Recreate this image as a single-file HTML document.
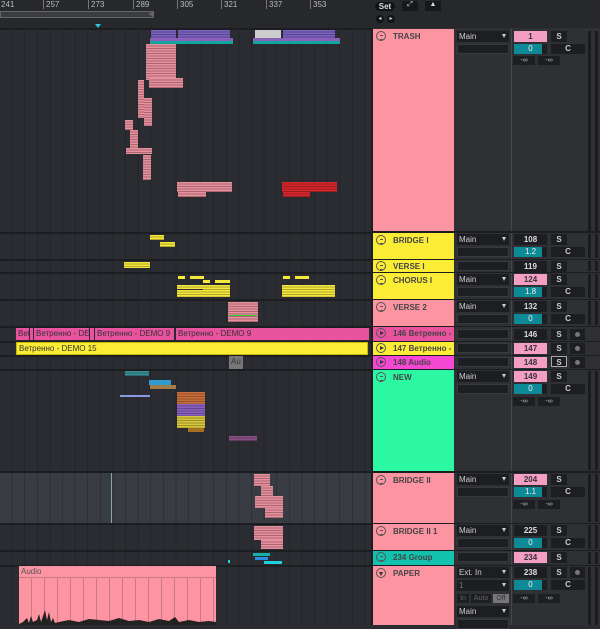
<!DOCTYPE html>
<html><head><meta charset="utf-8">
<style>
*{margin:0;padding:0;box-sizing:border-box}
body{width:600px;height:625px;overflow:hidden;background:#2a2c31;font-family:"Liberation Sans","DejaVu Sans",sans-serif;position:relative}
.a{position:absolute}
#arr{left:0;top:28px;width:371px;height:597px;background:#2a2c31;
background-image:repeating-linear-gradient(90deg,transparent 0,transparent 11.6px,#222428 11.6px,#222428 12.6px)}
.sep{position:absolute;left:0;width:371px;height:2px;background:#1c1d20}
.st{background-image:repeating-linear-gradient(180deg,rgba(0,0,0,.0) 0,rgba(0,0,0,0) 1.5px,rgba(0,0,0,.28) 1.5px,rgba(0,0,0,.28) 2.5px)}
.pk{background-color:#e8909d}
.ye{background-color:#f5e83c}
.cp{position:absolute;left:373px;width:81px;font-size:8px;font-weight:bold;color:#444;padding:3px 0 0 20px}
.cp i{position:absolute;left:3px;top:2px;width:10px;height:10px;border:1.2px solid #555;border-radius:50%}
.cp i:after{content:"";position:absolute;left:2.5px;top:2.5px;width:3px;height:3px;border-top:1px solid #555;border-bottom:1px solid #555}
.cp i.p:after{border:none;left:3px;top:2px;width:0;height:0;border-left:4px solid #333;border-top:2.5px solid transparent;border-bottom:2.5px solid transparent}
.cp i.d:after{border:none;left:1.5px;top:3px;width:0;height:0;border-top:4px solid #333;border-left:2.5px solid transparent;border-right:2.5px solid transparent}
.dd{position:absolute;left:457px;width:52px;height:11px;background:#1d1e21;color:#ccc;font-size:8px;padding:1px 2px}
.dd:after{content:"";position:absolute;right:3px;top:3px;border-top:4px solid #ccc;border-left:2.5px solid transparent;border-right:2.5px solid transparent}
.bx{position:absolute;left:457px;width:52px;height:10px;background:#1d1e21;border:1px solid #38393d}
.nb{position:absolute;left:514px;width:33px;height:11px;background:#1d1e21;color:#ddd;font-size:8px;font-weight:bold;text-align:center;line-height:11px}
.nb.pkn{background:#f59ec4;color:#333}
.tl{position:absolute;left:514px;width:33px;height:10px;background:#1d1e21;color:#eee;font-size:8px;text-align:center;line-height:10px}
.tl b{position:absolute;left:0;top:0;height:10px;width:28px;background:#0e8a97}
.tl span{position:relative}
.sb{position:absolute;left:551px;width:16px;height:11px;background:#1d1e21;color:#ccc;font-size:8px;font-weight:bold;text-align:center;line-height:11px}
.cb{position:absolute;left:551px;width:34px;height:10px;background:#1d1e21;color:#ccc;font-size:8px;font-weight:bold;text-align:center;line-height:10px}
.rb{position:absolute;left:570px;width:15px;height:11px;background:#1d1e21}
.rb:after{content:"";position:absolute;left:5px;top:3px;width:5px;height:5px;border-radius:50%;background:#777}
.inf{position:absolute;width:22px;height:9px;background:#1d1e21;color:#bbb;font-size:7px;text-align:center;line-height:9px}
.mt{position:absolute;left:588px;width:3px;background:#1a1b1e}
.mt2{position:absolute;left:595px;width:3px;background:#1a1b1e}
.clip{position:absolute;font-size:8px;color:#333;line-height:11px;padding-left:2px;overflow:hidden;white-space:nowrap}
</style></head><body>
<div class="a" style="left:0;top:0;width:371px;height:28px;background:#26282c"></div>
<div class="a" style="left:0;top:0;width:371px;height:10px;color:#bbb;font-size:8px">
<span class="a" style="left:1px">241</span><span class="a" style="left:43px;border-left:1px solid #777;padding-left:2px">257</span><span class="a" style="left:88px;border-left:1px solid #777;padding-left:2px">273</span><span class="a" style="left:133px;border-left:1px solid #777;padding-left:2px">289</span><span class="a" style="left:177px;border-left:1px solid #777;padding-left:2px">305</span><span class="a" style="left:221px;border-left:1px solid #777;padding-left:2px">321</span><span class="a" style="left:266px;border-left:1px solid #777;padding-left:2px">337</span><span class="a" style="left:310px;border-left:1px solid #777;padding-left:2px">353</span></div>
<div class="a" style="left:0;top:11px;width:154px;height:7px;background:#3a3c40;border:1px solid #666"></div>
<div class="a" style="left:148px;top:11px;width:0;height:0;border-right:6px solid #666;border-top:3.5px solid transparent;border-bottom:3.5px solid transparent"></div>
<div class="a" style="left:95px;top:24px;width:0;height:0;border-top:4px solid #2cc6d6;border-left:3px solid transparent;border-right:3px solid transparent"></div>
<div class="a" style="left:371px;top:0;width:229px;height:28px;background:#26282c"></div>
<div class="a" style="left:375px;top:2px;width:20px;height:9px;background:#121315;border-radius:5px;color:#ddd;font-size:8px;font-weight:bold;text-align:center;line-height:9px">Set</div>
<div class="a" style="left:402px;top:1px;width:16px;height:10px;background:#17181a;color:#ddd;font-size:7px;text-align:center">⤢</div>
<div class="a" style="left:425px;top:1px;width:16px;height:10px;background:#17181a;color:#ddd;font-size:7px;text-align:center">▲</div>
<div class="a" style="left:376px;top:15px;width:8px;height:8px;border-radius:50%;background:#121315;color:#ddd;font-size:6px;text-align:center;line-height:8px">◂</div>
<div class="a" style="left:387px;top:15px;width:8px;height:8px;border-radius:50%;background:#121315;color:#ddd;font-size:6px;text-align:center;line-height:8px">▸</div>

<div id="arr" class="a"></div>
<div class="a" style="left:0;top:473px;width:371px;height:50px;background:#393c43;background-image:repeating-linear-gradient(90deg,transparent 0,transparent 11.6px,#2f3137 11.6px,#2f3137 12.6px)"></div>
<div class="a" style="left:111px;top:473px;width:1px;height:50px;background:#8aa"></div>
<div class="sep" style="top:28px"></div>
<div class="sep" style="top:232px"></div><div class="sep" style="top:259px"></div><div class="sep" style="top:272px"></div><div class="sep" style="top:299px"></div><div class="sep" style="top:326px"></div><div class="sep" style="top:341px"></div><div class="sep" style="top:355px"></div><div class="sep" style="top:369px"></div><div class="sep" style="top:471px"></div><div class="sep" style="top:523px"></div><div class="sep" style="top:550px"></div><div class="sep" style="top:565px"></div>

<div class="a st" style="left:151px;top:30px;width:25px;height:8px;background-color:#7b62c0"></div>
<div class="a st" style="left:178px;top:30px;width:52px;height:8px;background-color:#7b62c0"></div>
<div class="a" style="left:150px;top:38px;width:83px;height:6px;background:linear-gradient(#8a5fb8 50%,#13a6a0 50%)"></div>
<div class="a" style="left:255px;top:30px;width:26px;height:8px;background:#ccc"></div>
<div class="a st" style="left:283px;top:30px;width:52px;height:8px;background-color:#7b62c0"></div>
<div class="a" style="left:253px;top:38px;width:87px;height:6px;background:linear-gradient(#8a5fb8 50%,#13a6a0 50%)"></div>
<div class="a st pk" style="left:146px;top:44px;width:30px;height:36px"></div>
<div class="a st pk" style="left:149px;top:78px;width:34px;height:10px"></div>
<div class="a st pk" style="left:144px;top:98px;width:8px;height:28px"></div>
<div class="a st pk" style="left:138px;top:80px;width:6px;height:38px"></div>
<div class="a st pk" style="left:125px;top:120px;width:8px;height:10px"></div>
<div class="a st pk" style="left:130px;top:130px;width:8px;height:20px"></div>
<div class="a st pk" style="left:126px;top:148px;width:26px;height:6px"></div>
<div class="a st pk" style="left:143px;top:155px;width:8px;height:25px"></div>
<div class="a st pk" style="left:177px;top:182px;width:55px;height:10px"></div>
<div class="a st pk" style="left:178px;top:192px;width:28px;height:5px"></div>
<div class="a st" style="left:282px;top:182px;width:55px;height:10px;background-color:#d8272b"></div>
<div class="a st" style="left:283px;top:192px;width:27px;height:5px;background-color:#d8272b"></div>
<div class="a st ye" style="left:150px;top:235px;width:14px;height:5px"></div>
<div class="a st ye" style="left:160px;top:242px;width:15px;height:5px"></div>
<div class="a st ye" style="left:124px;top:262px;width:26px;height:6px"></div>
<!-- chorus pieces -->
<div class="a ye" style="left:178px;top:276px;width:7px;height:3px"></div>
<div class="a ye" style="left:190px;top:276px;width:14px;height:3px"></div>
<div class="a ye" style="left:203px;top:280px;width:7px;height:3px"></div>
<div class="a ye" style="left:215px;top:280px;width:15px;height:3px"></div>
<div class="a st ye" style="left:177px;top:285px;width:26px;height:4px"></div>
<div class="a st ye" style="left:203px;top:285px;width:27px;height:12px"></div>
<div class="a st ye" style="left:177px;top:290px;width:26px;height:7px"></div>
<div class="a ye" style="left:283px;top:276px;width:7px;height:3px"></div>
<div class="a ye" style="left:295px;top:276px;width:14px;height:3px"></div>
<div class="a st ye" style="left:282px;top:285px;width:26px;height:5px"></div>
<div class="a st ye" style="left:308px;top:285px;width:27px;height:12px"></div>
<div class="a st ye" style="left:282px;top:290px;width:26px;height:7px"></div>
<div class="a st pk" style="left:228px;top:302px;width:30px;height:20px"></div>
<div class="a" style="left:229px;top:315px;width:28px;height:1px;background:#3c3"></div>
<div class="clip" style="left:16px;top:328px;width:13px;height:12px;background:#e8529e">Bet</div>
<div class="clip" style="left:30px;top:328px;width:3px;height:12px;background:#e8529e"></div>
<div class="clip" style="left:34px;top:328px;width:55px;height:12px;background:#e8529e">Ветренно - DEMO</div>
<div class="clip" style="left:90px;top:328px;width:4px;height:12px;background:#e8529e"></div>
<div class="clip" style="left:95px;top:328px;width:79px;height:12px;background:#e8529e">Ветренно - DEMO 9</div>
<div class="clip" style="left:176px;top:328px;width:193px;height:12px;background:#e8529e">Ветренно - DEMO 9</div>
<div class="clip" style="left:16px;top:342px;width:352px;height:13px;background:#fbed35;border:1px solid #c9b800">Ветренно - DEMO 15</div>
<div class="clip" style="left:229px;top:356px;width:14px;height:13px;background:#777;color:#333">Au</div>
<div class="a st" style="left:125px;top:371px;width:24px;height:5px;background-color:#3a8f97"></div>
<div class="a" style="left:149px;top:380px;width:22px;height:5px;background:#2f9bd0"></div>
<div class="a" style="left:150px;top:385px;width:26px;height:4px;background:#a07c4a"></div>
<div class="a" style="left:120px;top:395px;width:30px;height:2px;background:#8a9ae0"></div>
<div class="a st" style="left:177px;top:392px;width:28px;height:12px;background-color:#c96d3a"></div>
<div class="a st" style="left:177px;top:404px;width:28px;height:12px;background-color:#8a60c0"></div>
<div class="a st" style="left:177px;top:416px;width:28px;height:12px;background-color:#d8c83a"></div>
<div class="a" style="left:188px;top:428px;width:16px;height:4px;background:#a77020"></div>
<div class="a st" style="left:229px;top:436px;width:28px;height:5px;background-color:#8a5088"></div>
<div class="a st pk" style="left:254px;top:474px;width:16px;height:12px"></div>
<div class="a st pk" style="left:261px;top:486px;width:12px;height:10px"></div>
<div class="a st pk" style="left:255px;top:496px;width:28px;height:12px"></div>
<div class="a st pk" style="left:265px;top:508px;width:18px;height:10px"></div>
<div class="a st pk" style="left:254px;top:526px;width:29px;height:14px"></div>
<div class="a st pk" style="left:261px;top:540px;width:22px;height:9px"></div>
<div class="a" style="left:253px;top:553px;width:17px;height:3px;background:#13b0a8"></div>
<div class="a" style="left:255px;top:557px;width:13px;height:3px;background:#2a8fe0"></div>
<div class="a" style="left:264px;top:561px;width:18px;height:3px;background:#1fd0e0"></div>
<div class="a" style="left:228px;top:560px;width:2px;height:3px;background:#1fd0e0"></div>
<div class="a" style="left:19px;top:566px;width:197px;height:59px;background:#fc94a2;background-image:repeating-linear-gradient(90deg,transparent 0,transparent 12px,#c97884 12px,#c97884 13px)"></div>
<div class="a" style="left:19px;top:566px;width:197px;height:12px;background:#fc94a2;border-bottom:1px solid #c97884;font-size:8px;color:#555;padding:1px 2px">Audio</div>
<svg class="a" style="left:19px;top:600px" width="197" height="25"><path d="M0 24 L4 22 8 18 10 23 12 16 14 22 18 20 20 14 22 22 26 10 28 20 30 12 32 22 34 18 36 23 40 22 50 20 60 22 70 19 80 20 90 21 100 18 110 21 120 20 130 22 140 19 150 21 156 17 160 22 170 20 180 22 190 21 197 22 L197 25 L0 25Z" fill="#222"/></svg>

<div class="a" style="left:371px;top:28px;width:2px;height:597px;background:#1c1d20"></div>
<div class="a" style="left:454px;top:28px;width:57px;height:597px;background:#2e3034"></div>
<div class="a" style="left:511px;top:28px;width:1px;height:597px;background:#45474c"></div>
<div class="a" style="left:512px;top:28px;width:88px;height:597px;background:#2e3034"></div>
<div class="a" style="left:371px;top:231px;width:229px;height:2px;background:#1c1d20"></div>
<div class="a" style="left:371px;top:259px;width:229px;height:1px;background:#1c1d20"></div>
<div class="a" style="left:371px;top:272px;width:229px;height:1px;background:#1c1d20"></div>
<div class="a" style="left:371px;top:299px;width:229px;height:1px;background:#1c1d20"></div>
<div class="a" style="left:371px;top:326px;width:229px;height:1px;background:#1c1d20"></div>
<div class="a" style="left:371px;top:341px;width:229px;height:1px;background:#1c1d20"></div>
<div class="a" style="left:371px;top:355px;width:229px;height:1px;background:#1c1d20"></div>
<div class="a" style="left:371px;top:369px;width:229px;height:1px;background:#1c1d20"></div>
<div class="a" style="left:371px;top:471px;width:229px;height:2px;background:#1c1d20"></div>
<div class="a" style="left:371px;top:523px;width:229px;height:1px;background:#1c1d20"></div>
<div class="a" style="left:371px;top:550px;width:229px;height:1px;background:#1c1d20"></div>
<div class="a" style="left:371px;top:565px;width:229px;height:1px;background:#1c1d20"></div>

<div class="cp" style="top:29px;height:202px;background:#fc94a2"><i></i>TRASH</div>
<div class="cp" style="top:233px;height:26px;background:#fbed35"><i></i>BRIDGE I</div>
<div class="cp" style="top:260px;height:12px;background:#fbed35;padding-top:2px"><i style="top:1px"></i>VERSE I</div>
<div class="cp" style="top:273px;height:26px;background:#fbed35"><i></i>CHORUS I</div>
<div class="cp" style="top:300px;height:26px;background:#fc94a2"><i></i>VERSE 2</div>
<div class="cp" style="top:327px;height:14px;background:#e8529e;padding-top:2px"><i class="p" style="top:1px"></i>146 Ветренно -</div>
<div class="cp" style="top:342px;height:13px;background:#fbed35;padding-top:2px"><i class="p" style="top:1px"></i>147 Ветренно -</div>
<div class="cp" style="top:356px;height:13px;background:#f546d4;padding-top:2px"><i class="p" style="top:1px"></i>148 Audio</div>
<div class="cp" style="top:370px;height:101px;background:#2cf8a4"><i></i>NEW</div>
<div class="cp" style="top:473px;height:50px;background:#fc94a2"><i></i>BRIDGE II</div>
<div class="cp" style="top:524px;height:26px;background:#fc94a2"><i></i>BRIDGE II 1</div>
<div class="cp" style="top:551px;height:14px;background:#13c2ae;padding-top:2px"><i style="top:1px"></i>234 Group</div>
<div class="cp" style="top:566px;height:59px;background:#fc94a2"><i class="d"></i>PAPER</div>

<div class="dd" style="top:31px">Main</div><div class="bx" style="top:44px"></div>
<div class="dd" style="top:234px">Main</div><div class="bx" style="top:247px"></div>
<div class="bx" style="top:261px"></div>
<div class="dd" style="top:274px">Main</div><div class="bx" style="top:287px"></div>
<div class="dd" style="top:301px">Main</div><div class="bx" style="top:314px"></div>
<div class="bx" style="top:329px"></div><div class="bx" style="top:343px"></div><div class="bx" style="top:357px"></div>
<div class="dd" style="top:371px">Main</div><div class="bx" style="top:384px"></div>
<div class="dd" style="top:474px">Main</div><div class="bx" style="top:487px"></div>
<div class="dd" style="top:525px">Main</div><div class="bx" style="top:538px"></div>
<div class="bx" style="top:552px"></div>
<div class="dd" style="top:567px">Ext. In</div>
<div class="dd" style="top:580px;color:#777">1</div>
<div class="a" style="left:457px;top:594px;width:12px;height:9px;background:#1d1e21;color:#666;font-size:7px;text-align:center;line-height:9px">In</div>
<div class="a" style="left:471px;top:594px;width:20px;height:9px;background:#1d1e21;color:#666;font-size:7px;text-align:center;line-height:9px">Auto</div>
<div class="a" style="left:493px;top:594px;width:16px;height:9px;background:#777;color:#333;font-size:7px;text-align:center;line-height:9px">Off</div>
<div class="dd" style="top:606px">Main</div><div class="bx" style="top:619px"></div>

<div class="nb pkn" style="top:31px">1</div><div class="sb" style="top:31px">S</div>
<div class="tl" style="top:44px"><b></b><span>0</span></div><div class="cb" style="top:44px">C</div>
<div class="inf" style="left:513px;top:56px">-∞</div><div class="inf" style="left:538px;top:56px">-∞</div>
<div class="mt" style="top:31px;height:200px"></div><div class="mt2" style="top:31px;height:200px"></div>
<div class="nb" style="top:234px">108</div><div class="sb" style="top:234px">S</div>
<div class="tl" style="top:247px"><b></b><span>1.2</span></div><div class="cb" style="top:247px">C</div>
<div class="mt" style="top:234px;height:24px"></div><div class="mt2" style="top:234px;height:24px"></div>
<div class="nb" style="top:261px">119</div><div class="sb" style="top:261px">S</div>
<div class="mt" style="top:261px;height:10px"></div><div class="mt2" style="top:261px;height:10px"></div>
<div class="nb pkn" style="top:274px">124</div><div class="sb" style="top:274px">S</div>
<div class="tl" style="top:287px"><b></b><span>1.8</span></div><div class="cb" style="top:287px">C</div>
<div class="mt" style="top:274px;height:24px"></div><div class="mt2" style="top:274px;height:24px"></div>
<div class="nb" style="top:301px">132</div><div class="sb" style="top:301px">S</div>
<div class="tl" style="top:314px"><b></b><span>0</span></div><div class="cb" style="top:314px">C</div>
<div class="mt" style="top:301px;height:24px"></div><div class="mt2" style="top:301px;height:24px"></div>
<div class="nb" style="top:329px">146</div><div class="sb" style="top:329px">S</div><div class="rb" style="top:329px"></div>
<div class="nb pkn" style="top:343px">147</div><div class="sb" style="top:343px">S</div><div class="rb" style="top:343px"></div>
<div class="nb pkn" style="top:357px">148</div><div class="sb" style="top:356px;border:1px solid #aaa">S</div><div class="rb" style="top:357px"></div>
<div class="nb pkn" style="top:371px">149</div><div class="sb" style="top:371px">S</div>
<div class="tl" style="top:384px"><b></b><span>0</span></div><div class="cb" style="top:384px">C</div>
<div class="inf" style="left:513px;top:397px">-∞</div><div class="inf" style="left:538px;top:397px">-∞</div>
<div class="mt" style="top:371px;height:99px"></div><div class="mt2" style="top:371px;height:99px"></div>
<div class="nb pkn" style="top:474px">204</div><div class="sb" style="top:474px">S</div>
<div class="tl" style="top:487px"><b></b><span>1.1</span></div><div class="cb" style="top:487px">C</div>
<div class="inf" style="left:513px;top:500px">-∞</div><div class="inf" style="left:538px;top:500px">-∞</div>
<div class="mt" style="top:474px;height:48px"></div><div class="mt2" style="top:474px;height:48px"></div>
<div class="nb" style="top:525px">225</div><div class="sb" style="top:525px">S</div>
<div class="tl" style="top:538px"><b></b><span>0</span></div><div class="cb" style="top:538px">C</div>
<div class="mt" style="top:525px;height:24px"></div><div class="mt2" style="top:525px;height:24px"></div>
<div class="nb pkn" style="top:552px">234</div><div class="sb" style="top:552px">S</div>
<div class="mt" style="top:552px;height:12px"></div><div class="mt2" style="top:552px;height:12px"></div>
<div class="nb" style="top:567px">238</div><div class="sb" style="top:567px">S</div><div class="rb" style="top:567px"></div>
<div class="tl" style="top:580px"><b></b><span>0</span></div><div class="cb" style="top:580px">C</div>
<div class="inf" style="left:513px;top:594px">-∞</div><div class="inf" style="left:538px;top:594px">-∞</div>
<div class="mt" style="top:567px;height:58px"></div><div class="mt2" style="top:567px;height:58px"></div>
</body></html>
